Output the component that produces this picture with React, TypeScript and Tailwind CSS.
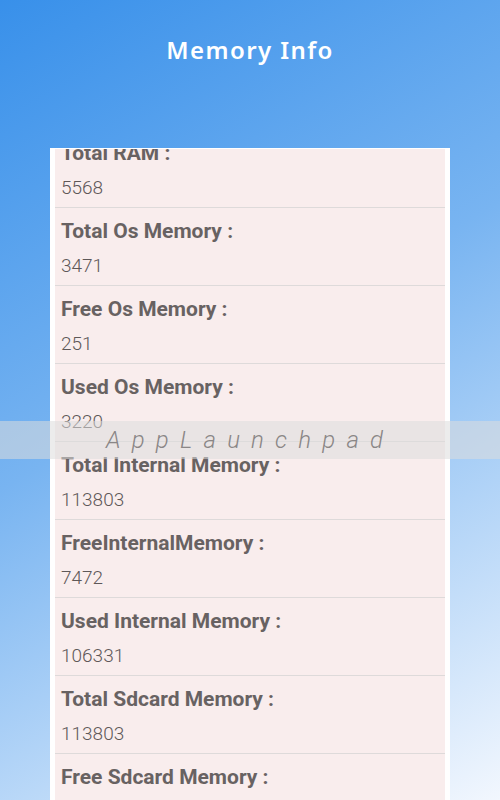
const rows = [
  { label: "Total RAM :", value: "5568" },
  { label: "Total Os Memory :", value: "3471" },
  { label: "Free Os Memory :", value: "251" },
  { label: "Used Os Memory :", value: "3220" },
  { label: "Total Internal Memory :", value: "113803" },
  { label: "FreeInternalMemory :", value: "7472" },
  { label: "Used Internal Memory :", value: "106331" },
  { label: "Total Sdcard Memory :", value: "113803" },
  { label: "Free Sdcard Memory :", value: "7472" },
];

function InfoRow({ label, value }: { label: string; value: string }) {
  return (
    <div className="h-[78px] border-b border-[#dedada] pl-[6px] pt-[11px]">
      <div className="text-[21px] leading-[24px] font-bold text-[#686262]">
        {label}
      </div>
      <div className="mt-[12px] text-[19px] leading-[22px] font-light text-[#5e5858]">
        {value}
      </div>
    </div>
  );
}

export default function App() {
  return (
    <div
      className="relative flex h-[800px] w-[500px] flex-col overflow-hidden bg-[linear-gradient(150deg,#3890ea_0%,#78b4f1_45%,#f2f7fe_100%)]"
      style={{ fontFamily: "Roboto, 'Liberation Sans', sans-serif" }}
    >
      {/* header */}
      <div className="h-[148px] shrink-0 pt-[36px] text-center">
        <h1
          className="text-[24px] leading-[28px] font-semibold tracking-[1.4px] text-white"
          style={{ fontFamily: "'Noto Sans', 'Open Sans', sans-serif" }}
        >
          Memory Info
        </h1>
      </div>

      {/* card */}
      <div className="mx-[50px] flex-1 overflow-hidden bg-white px-[5px] pt-px">
        <div className="h-full overflow-hidden bg-[#f9eded]">
          <div className="-mt-[19px]">
            {rows.map((r) => (
              <InfoRow key={r.label} label={r.label} value={r.value} />
            ))}
          </div>
        </div>
      </div>

      {/* watermark band */}
      <div className="absolute top-[421px] left-0 flex h-[38px] w-full items-center bg-[rgba(220,220,220,0.55)] pl-[106px]">
        <span className="text-[24px] leading-none font-light italic tracking-[11.2px] text-[#8a8686]">
          AppLaunchpad
        </span>
      </div>
    </div>
  );
}
